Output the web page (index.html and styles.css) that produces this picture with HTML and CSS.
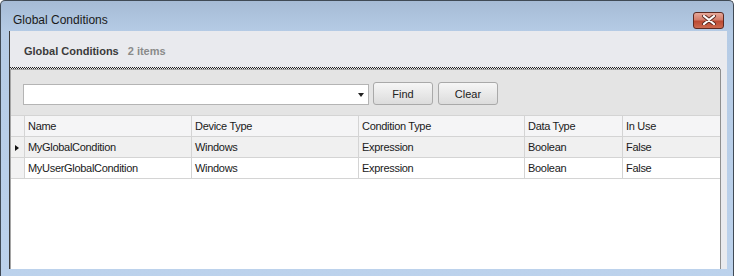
FILE: index.html
```html
<!DOCTYPE html>
<html lang="en">
<head>
  <meta charset="UTF-8" />
  <title>Global Conditions</title>
  <link rel="stylesheet" href="styles.css">
</head>
<body>
  <div class="window">
    <div class="titlebar">
      <span class="title">Global Conditions</span>
      <button class="btn-close">
        <svg width="16" height="10" viewBox="0 0 16 10">
          <path d="M3 1 L13 9 M13 1 L3 9" stroke="#5a2a22" stroke-width="4" stroke-linecap="round"/>
          <path d="M3 1 L13 9 M13 1 L3 9" stroke="#fff" stroke-width="2.2" stroke-linecap="round"/>
        </svg>
      </button>
    </div>

    <div class="client">
      <div class="header">
        <span class="header-title">Global Conditions</span>
        <span class="header-count">2 items</span>
      </div>
      <div class="dotted"></div>

      <div class="panel">
        <div class="search">
          <div class="combo">
            <span class="combo-arrow"></span>
          </div>
          <button class="btn">Find</button>
          <button class="btn">Clear</button>
        </div>

        <div class="grid">
          <table>
            <thead>
              <tr>
                <th class="sel"></th>
                <th class="c-name">Name</th>
                <th class="c-dev">Device Type</th>
                <th class="c-cond">Condition Type</th>
                <th class="c-data">Data Type</th>
                <th>In Use</th>
              </tr>
            </thead>
            <tbody>
              <tr class="current">
                <td class="sel"><span class="row-arrow"></span></td>
                <td>MyGlobalCondition</td>
                <td>Windows</td>
                <td>Expression</td>
                <td>Boolean</td>
                <td>False</td>
              </tr>
              <tr>
                <td class="sel"></td>
                <td>MyUserGlobalCondition</td>
                <td>Windows</td>
                <td>Expression</td>
                <td>Boolean</td>
                <td>False</td>
              </tr>
            </tbody>
          </table>
        </div>
      </div>
    </div>
  </div>
</body>
</html>
```

FILE: styles.css
```css
body {
  margin: 0;
  font-family: "Liberation Sans", Arial, sans-serif;
  background: #fff;
}

.window {
  width: 734px;
  height: 276px;
  box-sizing: border-box;
  border: 1px solid #404a55;
  border-bottom: none;
  border-radius: 5px 5px 0 0;
  background: linear-gradient(to bottom, #a6bbd5 0, #b5cbe5 30px, #bcd2ec 100%);
  display: flex;
  flex-direction: column;
}

.titlebar {
  height: 30px;
  display: flex;
  align-items: center;
  padding: 0 9px 0 12px;
  box-sizing: border-box;
}

.title {
  font-size: 12px;
  color: #1a1a1a;
  margin-top: 8px;
}

.btn-close {
  margin-left: auto;
  margin-top: 8px;
  width: 31px;
  height: 17px;
  padding: 0;
  border: 1px solid #5d2a22;
  border-radius: 3px;
  background: linear-gradient(to bottom, #e7a89a 0%, #d37d6b 45%, #bc4a33 55%, #cc6a50 100%);
  display: flex;
  align-items: center;
  justify-content: center;
}

.client {
  flex: 1;
  margin: 0 6px 7px 8px;
  border-left: 1px solid #3c3c3c;
  background: #e9eaee;
  display: flex;
  flex-direction: column;
}

.header {
  height: 36px;
  display: flex;
  align-items: center;
  padding-left: 14px;
  font-size: 11px;
  font-weight: bold;
  box-sizing: border-box;
  padding-top: 3px;
}

.header-title {
  color: #3b3b3b;
}

.header-count {
  color: #8a8a8a;
  margin-left: 9px;
}

.dotted {
  height: 2px;
  margin-right: 7px;
  background-image: repeating-linear-gradient(to right, #222 0 1px, #e9eaee 1px 2px),
                    repeating-linear-gradient(to right, #e9eaee 0 1px, #222 1px 2px);
  background-size: 100% 1px, 100% 1px;
  background-position: 0 0, 0 1px;
  background-repeat: no-repeat;
}

.panel {
  flex: 1;
  margin-right: 6px;
  border: 1px solid #a5a5a5;
  border-right-color: #8e8e8e;
  border-bottom: none;
  background: #e4e4e4;
  display: flex;
  flex-direction: column;
}

.search {
  height: 45px;
  display: flex;
  align-items: center;
  padding: 0 0 0 12px;
  gap: 3px;
  box-sizing: border-box;
}

.combo {
  width: 346px;
  height: 21px;
  box-sizing: border-box;
  border: 1px solid #b4b4b4;
  background: #fff;
  position: relative;
  margin-top: 3px;
}

.combo-arrow {
  position: absolute;
  right: 4px;
  top: 8px;
  border-left: 3px solid transparent;
  border-right: 3px solid transparent;
  border-top: 4px solid #222;
}

.btn {
  width: 60px;
  height: 23px;
  margin-top: 2px;
  margin-left: 1px;
  border: 1px solid #a9a9a9;
  border-radius: 3px;
  background: linear-gradient(to bottom, #f6f6f6 0%, #e9e9e9 50%, #dcdcdc 100%);
  font-family: "Liberation Sans", Arial, sans-serif;
  font-size: 11px;
  color: #222;
  padding: 0;
}

.btn + .btn {
  margin-left: 2px;
}

.grid {
  flex: 1;
  background: #fff;
}

table {
  width: 100%;
  border-collapse: collapse;
  table-layout: fixed;
  font-size: 11px;
  letter-spacing: -0.3px;
  color: #1a1a1a;
}

th, td {
  height: 20px;
  padding: 0 0 0 3px;
  text-align: left;
  font-weight: normal;
  border-right: 1px solid #d4d4d4;
  border-bottom: 1px solid #d4d4d4;
  white-space: nowrap;
  overflow: hidden;
}

th {
  background: #f5f5f6;
  border-top: 1px solid #d4d4d4;
}

th:last-child, td:last-child {
  border-right: none;
}

.sel {
  width: 10px;
  background: #f2f2f3;
}

.c-name { width: 163px; }
.c-dev { width: 163px; }
.c-cond { width: 162px; }
.c-data { width: 94px; }

tr.current td {
  background: #f0f0f0;
}

.row-arrow {
  display: inline-block;
  margin-left: 1px;
  border-top: 3px solid transparent;
  border-bottom: 3px solid transparent;
  border-left: 4px solid #111;
  vertical-align: middle;
}
```
